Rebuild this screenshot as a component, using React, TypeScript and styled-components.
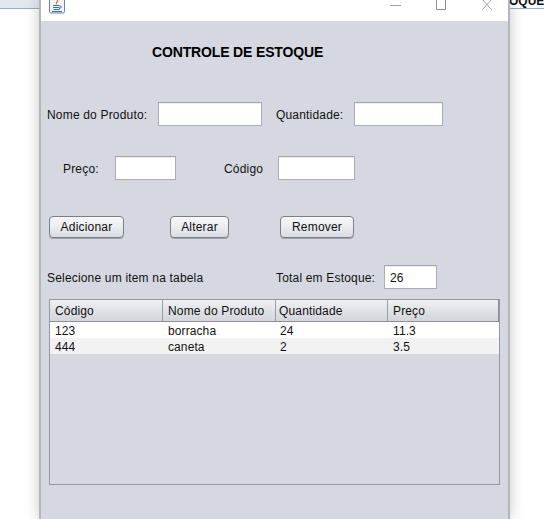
import React from 'react';
import styled, { createGlobalStyle } from 'styled-components';

const Global = createGlobalStyle`
  html, body { margin: 0; padding: 0; background: #fff; }
  body { width: 544px; height: 519px; overflow: hidden; font-family: "Liberation Sans", Arial, sans-serif; }
`;
const Desktop = styled.div`
  position: relative; width: 544px; height: 519px; overflow: hidden; background: #fff;
`;
const BackBar = styled.div`
  position: absolute; left: 0; top: 0; width: 544px; height: 9px; box-sizing: border-box;
  background: linear-gradient(90deg, #e3e8ee 0%, #d5dee8 60%, #c4d6e8 100%);
  border-bottom: 1px solid #8fb0d4;
`;
const BackTitle = styled.div`
  position: absolute; left: 509px; top: -6px; width: 35px; height: 14px; background: #fff;
  font-size: 12px; line-height: 14px; font-weight: 700; color: #111; white-space: nowrap; overflow: hidden;
`;
const Win = styled.div`
  position: absolute; left: 39px; top: 0; width: 471px; height: 519px; box-sizing: border-box;
  border-left: 2px solid #b4b6b8; border-right: 2px solid #b4b6b8;
  background: #d5d8e0;
  box-shadow: 0 0 14px rgba(0,0,0,.22);
`;
const TitleBar = styled.div`
  height: 21px; background: #fff; display: flex; align-items: flex-start; padding-left: 8px;
`;
const Controls = styled.div`
  margin-left: auto; display: flex; align-items: flex-start; gap: 35px; padding-right: 15px;
`;
const Content = styled.div`
  padding: 0 0 0 6px; font-size: 12px; color: #111;
`;
const Heading = styled.h1`
  margin: 0; padding: 23px 0 0 105px; font-size: 14px; line-height: 17px; font-weight: 700; color: #000;
  height: 58px; box-sizing: border-box; letter-spacing: -.15px; white-space: nowrap;
`;
const Row = styled.div<{ $top: number }>`
  display: flex; align-items: center; margin-top: ${p => p.$top}px;
`;
const Lbl = styled.label<{ $w: number; $pl?: number }>`
  display: block; width: ${p => p.$w}px; padding: 2px 0 0 ${p => p.$pl ?? 0}px; box-sizing: border-box;
  white-space: nowrap; line-height: 14px; letter-spacing: .18px; flex: none;
`;
const Field = styled.div<{ $w: number }>`
  width: ${p => p.$w}px; height: 24px; box-sizing: border-box; flex: none;
  background: #fff; border: 1px solid #abadb3; border-top-color: #a4a6ab; box-shadow: inset 0 1px 0 #eee;
  font-size: 12px; line-height: 24px; padding-left: 5px;
`;
const Btn = styled.button<{ $w: number; $ml: number }>`
  width: ${p => p.$w}px; height: 22px; margin-left: ${p => p.$ml}px; padding: 0 0 1px; box-sizing: border-box; flex: none;
  border: 1px solid #7a7f86; border-radius: 4px; font: 12px "Liberation Sans", Arial, sans-serif; color: #111;
  letter-spacing: .2px;
  background: linear-gradient(#f6f7f8 0%, #eceef1 45%, #d9dce2 100%);
  box-shadow: 0 1px 0 #9ea2aa;
`;
const Table = styled.div`
  margin: 10px 0 0 2px; width: 451px; height: 186px; box-sizing: border-box; border: 1px solid #94979f; background: #d5d8e0;
`;
const cols = '113px 113px 112px 1fr';
const Head = styled.div`
  display: grid; grid-template-columns: ${cols}; height: 22px; box-sizing: border-box;
  border-bottom: 1px solid #8d9096; border-right: 1px solid #8d9096;
  background: linear-gradient(#eef0f2 0%, #dfe1e6 55%, #d3d5da 100%);
`;
const HeadCell = styled.div`
  padding: 1px 0 0 5px; line-height: 20px; font-size: 12px; letter-spacing: .15px; border-right: 1px solid #9b9ea6;
  &:nth-child(3) { padding-left: 3px; }
  &:last-child { border-right: 0; }
`;
const BodyRow = styled.div<{ $alt?: boolean }>`
  display: grid; grid-template-columns: ${cols}; height: 16px; background: ${p => (p.$alt ? '#f2f2f2' : '#fff')};
`;
const BodyCell = styled.div`
  padding: 1px 0 0 5px; line-height: 17px; font-size: 12px; letter-spacing: .1px;
  &:nth-child(3) { padding-left: 4px; }
`;
const Glyph = styled.svg`
  display: block; flex: none;
`;

const JavaIcon = () => (
  <Glyph width="16" height="14" viewBox="0 0 16 14">
    <rect x=".5" y="-3" width="15" height="16" rx="1.5" fill="#f1f4f9" stroke="#6d83a3" />
    <path d="M8.5 0c1 1.5-2 2.5-.8 4.2" fill="none" stroke="#d5761f" strokeWidth="1.3" />
    <path d="M4 5.5h6.5M4 7.5h6.5M4.5 9.5h6M3 11.5h10" fill="none" stroke="#3e6ea8" strokeWidth="1" />
    <path d="M10.5 6c2.5 0 2.5 2-.5 2.5" fill="none" stroke="#3e6ea8" strokeWidth="1" />
  </Glyph>
);
const Minimize = () => (
  <Glyph width="11" height="10" viewBox="0 0 11 10">
    <path d="M0 5.5h11" stroke="#a0a0a0" strokeWidth="1" />
  </Glyph>
);
const Maximize = () => (
  <Glyph width="10" height="10" viewBox="0 0 10 10">
    <path d="M.5 -2h9v11.5h-9z" fill="none" stroke="#8f8f8f" strokeWidth="1" />
  </Glyph>
);
const Close = () => (
  <Glyph width="12" height="10" viewBox="0 0 12 10">
    <path d="M1 -1l10 11M11 -1L1 10" stroke="#a6a6a6" strokeWidth="1" />
  </Glyph>
);

const data = [
  ['123', 'borracha', '24', '11.3'],
  ['444', 'caneta', '2', '3.5'],
];

export default function App() {
  return (
    <Desktop>
      <Global />
      <BackBar />
      <BackTitle>OQUE (</BackTitle>
      <Win>
        <TitleBar>
          <JavaIcon />
          <Controls>
            <Minimize />
            <Maximize />
            <Close />
          </Controls>
        </TitleBar>
        <Content>
          <Heading>CONTROLE DE ESTOQUE</Heading>
          <Row $top={23}>
            <Lbl $w={111}>Nome do Produto:</Lbl>
            <Field $w={104} />
            <Lbl $w={92} $pl={14}>Quantidade:</Lbl>
            <Field $w={89} />
          </Row>
          <Row $top={30}>
            <Lbl $w={68} $pl={16}>Preço:</Lbl>
            <Field $w={61} />
            <Lbl $w={102} $pl={48}>Código</Lbl>
            <Field $w={77} />
          </Row>
          <Row $top={36}>
            <Btn $w={75} $ml={2}>Adicionar</Btn>
            <Btn $w={59} $ml={46}>Alterar</Btn>
            <Btn $w={74} $ml={51}>Remover</Btn>
          </Row>
          <Row $top={27}>
            <Lbl $w={229}>Selecione um item na tabela</Lbl>
            <Lbl $w={108}>Total em Estoque:</Lbl>
            <Field $w={53}>26</Field>
          </Row>
          <Table>
            <Head>
              <HeadCell>Código</HeadCell>
              <HeadCell>Nome do Produto</HeadCell>
              <HeadCell>Quantidade</HeadCell>
              <HeadCell>Preço</HeadCell>
            </Head>
            {data.map((r, i) => (
              <BodyRow key={r[0]} $alt={i % 2 === 1}>
                {r.map(c => <BodyCell key={c}>{c}</BodyCell>)}
              </BodyRow>
            ))}
          </Table>
        </Content>
      </Win>
    </Desktop>
  );
}
